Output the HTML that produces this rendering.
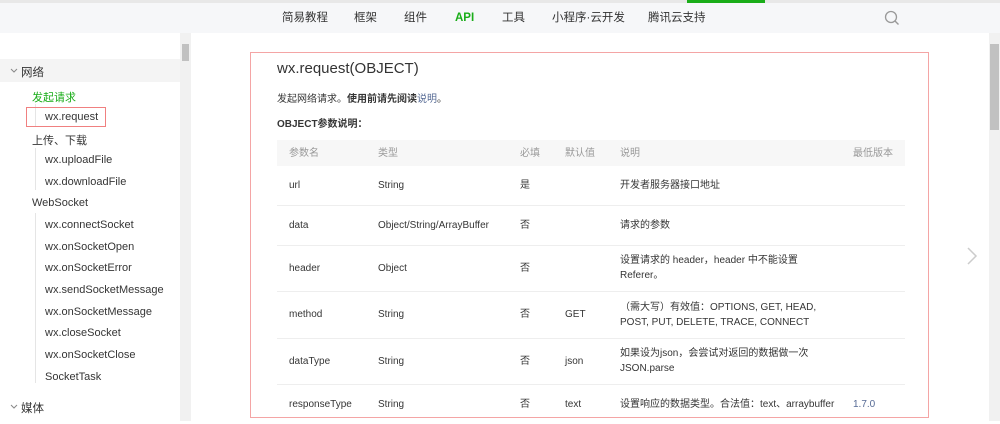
<!DOCTYPE html><html><head><meta charset="utf-8"><style>
*{margin:0;padding:0;box-sizing:border-box}
body{width:1000px;height:421px;overflow:hidden;background:#fff;font-family:"Liberation Sans","Noto Sans CJK SC",sans-serif;color:#353535;position:relative}
.a{position:absolute;white-space:nowrap}
.top{position:absolute;left:0;top:0;width:1000px;height:33px;background:#f6f7f9;border-top:3px solid #e8e8e8}
.nav{font-size:11.5px;top:11px;line-height:15px;height:15px;color:#333}
.sb{font-size:11px;color:#353535}
table{table-layout:fixed}
td,th{font-size:10px;font-weight:normal;text-align:left;color:#353535;vertical-align:middle;line-height:15px}
.ch{position:absolute;width:9px;height:6px}
</style></head><body>
<div class="top"></div>
<div class="a" style="left:687px;top:0;width:78px;height:3px;background:#1aad19"></div>
<div class="a nav" style="left:282px">简易教程</div>
<div class="a nav" style="left:354px">框架</div>
<div class="a nav" style="left:404px">组件</div>
<div class="a nav" style="left:455px;color:#1aad19;font-weight:bold">API</div>
<div class="a nav" style="left:502px">工具</div>
<div class="a nav" style="left:552px">小程序·云开发</div>
<div class="a nav" style="left:648px">腾讯云支持</div>
<svg class="a" style="left:884px;top:10px" width="16" height="16"><circle cx="7" cy="7" r="5.5" fill="none" stroke="#999" stroke-width="1.3"/><path d="M11 11l3.5 3.5" stroke="#999" stroke-width="1.4"/></svg>
<div class="a" style="left:180px;top:33px;width:11px;height:388px;background:#f1f1f1"></div>
<div class="a" style="left:182px;top:44px;width:7px;height:17px;background:#c1c1c1"></div>
<div class="a" style="left:989px;top:33px;width:11px;height:388px;background:#f1f1f1"></div>
<div class="a" style="left:990px;top:44px;width:9px;height:86px;background:#c1c1c1"></div>
<div class="a" style="left:0;top:59px;width:180px;height:23px;background:#f4f4f4"></div>
<svg class="a" style="left:10px;top:68px" width="8" height="6"><path d="M1 1l3 3 3-3" fill="none" stroke="#888" stroke-width="1"/></svg>
<div class="a sb" style="left:21px;top:64px;font-size:11.5px">网络</div>
<div class="a sb" style="left:32px;top:89px;color:#1aad19">发起请求</div>
<div class="a" style="left:35px;top:104px;width:1px;height:22px;background:#e5e5e5"></div>
<div class="a" style="left:26px;top:107px;width:80px;height:20px;border:1px solid #f08080"></div>
<div class="a sb" style="left:45px;top:111px">wx.request</div>
<div class="a sb" style="left:32px;top:132px">上传、下载</div>
<div class="a" style="left:35px;top:148px;width:1px;height:42px;background:#e5e5e5"></div>
<div class="a sb" style="left:45px;top:154px">wx.uploadFile</div>
<div class="a sb" style="left:45px;top:176px">wx.downloadFile</div>
<div class="a sb" style="left:32px;top:197px">WebSocket</div>
<div class="a" style="left:35px;top:213px;width:1px;height:170px;background:#e5e5e5"></div>
<div class="a sb" style="left:45px;top:219px">wx.connectSocket</div>
<div class="a sb" style="left:45px;top:241px">wx.onSocketOpen</div>
<div class="a sb" style="left:45px;top:262px">wx.onSocketError</div>
<div class="a sb" style="left:45px;top:284px">wx.sendSocketMessage</div>
<div class="a sb" style="left:45px;top:306px">wx.onSocketMessage</div>
<div class="a sb" style="left:45px;top:327px">wx.closeSocket</div>
<div class="a sb" style="left:45px;top:349px">wx.onSocketClose</div>
<div class="a sb" style="left:45px;top:371px">SocketTask</div>
<svg class="a" style="left:10px;top:404px" width="8" height="6"><path d="M1 1l3 3 3-3" fill="none" stroke="#888" stroke-width="1"/></svg>
<div class="a sb" style="left:21px;top:400px;font-size:11.5px">媒体</div>
<div class="a" style="left:250px;top:52px;width:679px;height:366px;border:1px solid #f4a5a5"></div>
<div class="a" style="left:277px;top:60px;font-size:15px;color:#333">wx.request(OBJECT)</div>
<div class="a" style="left:277px;top:90px;font-size:10px">发起网络请求。<b>使用前请先阅读</b><span style="color:#576b95">说明</span>。</div>
<div class="a" style="left:277px;top:115px;font-size:10px;font-weight:bold">OBJECT参数说明：</div>
<table class="a" style="left:277px;top:140px;width:628px;border-collapse:collapse">
<colgroup><col style="width:101px"><col style="width:142px"><col style="width:45px"><col style="width:55px"><col style="width:233px"><col></colgroup>
<tr style="background:#f7f7f7;height:26px"><th style="padding-left:12px;color:#999">参数名</th><th style="color:#999">类型</th><th style="color:#999">必填</th><th style="color:#999">默认值</th><th style="color:#999">说明</th><th style="color:#999">最低版本</th></tr>
<tr style="height:39px;border-bottom:1px solid #eee"><td style="padding-left:12px">url</td><td>String</td><td>是</td><td></td><td>开发者服务器接口地址</td><td></td></tr>
<tr style="height:40px;border-bottom:1px solid #eee"><td style="padding-left:12px">data</td><td>Object/String/ArrayBuffer</td><td>否</td><td></td><td>请求的参数</td><td></td></tr>
<tr style="height:46px;border-bottom:1px solid #eee"><td style="padding-left:12px">header</td><td>Object</td><td>否</td><td></td><td>设置请求的 header，header 中不能设置<br>Referer。</td><td></td></tr>
<tr style="height:47px;border-bottom:1px solid #eee"><td style="padding-left:12px">method</td><td>String</td><td>否</td><td>GET</td><td>（需大写）有效值：OPTIONS, GET, HEAD,<br>POST, PUT, DELETE, TRACE, CONNECT</td><td></td></tr>
<tr style="height:46px;border-bottom:1px solid #eee"><td style="padding-left:12px">dataType</td><td>String</td><td>否</td><td>json</td><td>如果设为json，会尝试对返回的数据做一次<br>JSON.parse</td><td></td></tr>
<tr style="height:40px"><td style="padding-left:12px">responseType</td><td>String</td><td>否</td><td>text</td><td style="white-space:nowrap">设置响应的数据类型。合法值：text、arraybuffer</td><td style="color:#576b95">1.7.0</td></tr>
</table>
<svg class="a" style="left:966px;top:247px" width="12" height="18"><path d="M2 1l8 8-8 8" fill="none" stroke="#ccc" stroke-width="1.5"/></svg>
</body></html>
